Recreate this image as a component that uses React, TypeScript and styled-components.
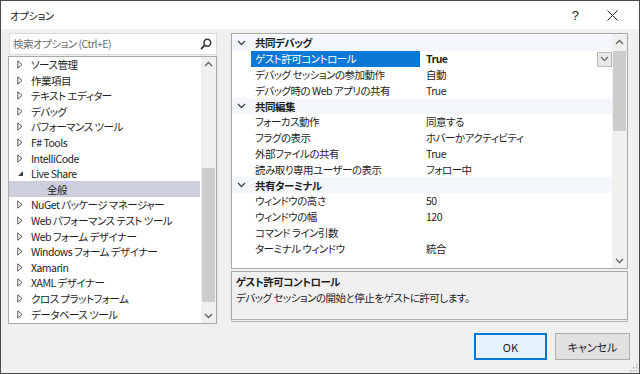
import React from 'react';
import styled, { createGlobalStyle } from 'styled-components';

const GlobalStyle = createGlobalStyle`
  html, body {
    margin: 0;
    padding: 0;
    background: #f0f0f0;
  }
  * {
    box-sizing: border-box;
  }
`;

interface TreeItem {
  label: string;
  state: 'closed' | 'open' | 'leaf';
  selected?: boolean;
}

interface PropRow {
  kind: 'category' | 'prop';
  name: string;
  value?: string;
  selected?: boolean;
}

const treeItems: TreeItem[] = [
  { label: 'ソース管理', state: 'closed' },
  { label: '作業項目', state: 'closed' },
  { label: 'テキスト エディター', state: 'closed' },
  { label: 'デバッグ', state: 'closed' },
  { label: 'パフォーマンス ツール', state: 'closed' },
  { label: 'F# Tools', state: 'closed' },
  { label: 'IntelliCode', state: 'closed' },
  { label: 'Live Share', state: 'open' },
  { label: '全般', state: 'leaf', selected: true },
  { label: 'NuGet パッケージ マネージャー', state: 'closed' },
  { label: 'Web パフォーマンス テスト ツール', state: 'closed' },
  { label: 'Web フォーム デザイナー', state: 'closed' },
  { label: 'Windows フォーム デザイナー', state: 'closed' },
  { label: 'Xamarin', state: 'closed' },
  { label: 'XAML デザイナー', state: 'closed' },
  { label: 'クロス プラットフォーム', state: 'closed' },
  { label: 'データベース ツール', state: 'closed' },
  { label: 'テスト', state: 'closed' },
];

const propRows: PropRow[] = [
  { kind: 'category', name: '共同デバッグ' },
  { kind: 'prop', name: 'ゲスト許可コントロール', value: 'True', selected: true },
  { kind: 'prop', name: 'デバッグ セッションの参加動作', value: '自動' },
  { kind: 'prop', name: 'デバッグ時の Web アプリの共有', value: 'True' },
  { kind: 'category', name: '共同編集' },
  { kind: 'prop', name: 'フォーカス動作', value: '同意する' },
  { kind: 'prop', name: 'フラグの表示', value: 'ホバーかアクティビティ' },
  { kind: 'prop', name: '外部ファイルの共有', value: 'True' },
  { kind: 'prop', name: '読み取り専用ユーザーの表示', value: 'フォロー中' },
  { kind: 'category', name: '共有ターミナル' },
  { kind: 'prop', name: 'ウィンドウの高さ', value: '50' },
  { kind: 'prop', name: 'ウィンドウの幅', value: '120' },
  { kind: 'prop', name: 'コマンド ライン引数', value: '' },
  { kind: 'prop', name: 'ターミナル ウィンドウ', value: '統合' },
];

const Chevron = ({ up, color = '#606060' }: { up?: boolean; color?: string }) => (
  <svg width="9" height="6" viewBox="0 0 9 6">
    <path
      d={up ? 'M1 5 L4.5 1.5 L8 5' : 'M1 1 L4.5 4.5 L8 1'}
      fill="none"
      stroke={color}
      strokeWidth="1.3"
    />
  </svg>
);

const Expander = ({ state }: { state: TreeItem['state'] }) => {
  if (state === 'leaf') return <ExpanderBox />;
  return (
    <ExpanderBox>
      {state === 'closed' ? (
        <svg width="6" height="9" viewBox="0 0 6 9">
          <path d="M0.8 0.8 L5 4.5 L0.8 8.2 Z" fill="none" stroke="#555" strokeWidth="1" />
        </svg>
      ) : (
        <svg width="7" height="7" viewBox="0 0 7 7">
          <path d="M6 1 L6 6 L1 6 Z" fill="#444" />
        </svg>
      )}
    </ExpanderBox>
  );
};

export default function App() {
  return (
    <>
      <GlobalStyle />
      <Window>
        <TitleBar>
          <TitleText>オプション</TitleText>
          <TitleButtons>
            <HelpButton>?</HelpButton>
            <CloseButton>
              <svg width="11" height="11" viewBox="0 0 11 11">
                <path d="M0.5 0.5 L10.5 10.5 M10.5 0.5 L0.5 10.5" stroke="#222" strokeWidth="1" />
              </svg>
            </CloseButton>
          </TitleButtons>
        </TitleBar>

        <Body>
          <LeftColumn>
            <SearchBox>
              <SearchText>検索オプション (Ctrl+E)</SearchText>
              <svg width="12" height="12" viewBox="0 0 12 12">
                <circle cx="7.3" cy="4.7" r="3.4" fill="none" stroke="#333" strokeWidth="1.5" />
                <path d="M4.8 7.2 L1 11" stroke="#333" strokeWidth="1.8" />
              </svg>
            </SearchBox>
            <TreeBox>
              <TreeList>
                {treeItems.map((item) => (
                  <TreeRow key={item.label} $selected={item.selected} $indent={item.state === 'leaf' ? 1 : 0}>
                    <Expander state={item.state} />
                    <span>{item.label}</span>
                  </TreeRow>
                ))}
              </TreeList>
              <ScrollBar>
                <ScrollArrow>
                  <Chevron up />
                </ScrollArrow>
                <ScrollTrack>
                  <ScrollThumb $top={96} $height={134} />
                </ScrollTrack>
                <ScrollArrow>
                  <Chevron />
                </ScrollArrow>
              </ScrollBar>
            </TreeBox>
          </LeftColumn>

          <RightColumn>
            <GridBox>
              <GridList>
                {propRows.map((row) =>
                  row.kind === 'category' ? (
                    <CategoryRow key={row.name}>
                      <Gutter>
                        <Chevron color="#444" />
                      </Gutter>
                      <CategoryName>{row.name}</CategoryName>
                    </CategoryRow>
                  ) : (
                    <PropertyRow key={row.name}>
                      <Gutter />
                      <PropName $selected={row.selected}>{row.name}</PropName>
                      <PropValue $bold={row.selected}>
                        <span>{row.value}</span>
                        {row.selected && (
                          <DropButton>
                            <Chevron color="#707070" />
                          </DropButton>
                        )}
                      </PropValue>
                    </PropertyRow>
                  )
                )}
              </GridList>
              <ScrollBar>
                <ScrollArrow>
                  <Chevron up />
                </ScrollArrow>
                <ScrollTrack>
                  <ScrollThumb $top={2} $height={80} />
                </ScrollTrack>
                <ScrollArrow>
                  <Chevron />
                </ScrollArrow>
              </ScrollBar>
            </GridBox>
            <DescriptionBox>
              <DescTitle>ゲスト許可コントロール</DescTitle>
              <DescText>デバッグ セッションの開始と停止をゲストに許可します。</DescText>
            </DescriptionBox>
          </RightColumn>
        </Body>

        <Footer>
          <DialogButton $primary>OK</DialogButton>
          <DialogButton>キャンセル</DialogButton>
        </Footer>
        <Grip>
          <svg width="10" height="10" viewBox="0 0 10 10">
            <g fill="#b4b4b4">
              <rect x="8" y="2" width="1.5" height="1.5" />
              <rect x="5" y="5" width="1.5" height="1.5" />
              <rect x="8" y="5" width="1.5" height="1.5" />
              <rect x="2" y="8" width="1.5" height="1.5" />
              <rect x="5" y="8" width="1.5" height="1.5" />
              <rect x="8" y="8" width="1.5" height="1.5" />
            </g>
          </svg>
        </Grip>
      </Window>
    </>
  );
}

const Window = styled.div`
  position: relative;
  width: 640px;
  height: 374px;
  border: 1px solid #4a4a4a;
  background: #f0f0f0;
  color: #1e1e1e;
  font-family: "Noto Sans CJK JP", "Noto Sans", sans-serif;
  font-feature-settings: "palt";
  font-size: 10.5px;
  letter-spacing: -0.5px;
  display: flex;
  flex-direction: column;
  overflow: hidden;
`;

const TitleBar = styled.div`
  height: 28px;
  display: flex;
  align-items: center;
  padding-left: 9px;
  background: #ffffff;
`;

const TitleText = styled.div`
  flex-grow: 1;
`;

const TitleButtons = styled.div`
  display: flex;
  align-items: center;
  height: 100%;
`;

const HelpButton = styled.div`
  width: 28px;
  text-align: center;
  font-family: "Liberation Sans", sans-serif;
  font-size: 13px;
`;

const CloseButton = styled.div`
  width: 46px;
  height: 100%;
  display: flex;
  align-items: center;
  justify-content: center;
  margin-right: 4px;
`;

const Body = styled.div`
  display: flex;
  gap: 14px;
  padding: 4px 0 0 7px;
  height: 295px;
`;

const LeftColumn = styled.div`
  width: 209px;
  display: flex;
  flex-direction: column;
  gap: 1px;
`;

const SearchBox = styled.div`
  height: 22px;
  margin-left: 1px;
  background: #ffffff;
  border: 1px solid #d9d9d9;
  display: flex;
  align-items: center;
  justify-content: space-between;
  padding: 0 4px 0 3px;
`;

const SearchText = styled.span`
  color: #6d6d6d;
`;

const TreeBox = styled.div`
  height: 272px;
  background: #ffffff;
  border: 1px solid #a9a9a9;
  display: flex;
  overflow: hidden;
`;

const TreeList = styled.div`
  flex-grow: 1;
  padding: 0 1px 0 0;
  overflow: hidden;
`;

const TreeRow = styled.div<{ $selected?: boolean; $indent: number }>`
  height: 15.6px;
  display: flex;
  align-items: center;
  padding-left: ${(p) => 6 + p.$indent * 16}px;
  background: ${(p) => (p.$selected ? '#cdd0dc' : 'transparent')};
  white-space: nowrap;
`;

const ExpanderBox = styled.span`
  width: 10px;
  display: inline-flex;
  align-items: center;
  justify-content: center;
  margin-right: 6px;
`;

const ScrollBar = styled.div`
  width: 15px;
  flex-shrink: 0;
  background: #f0f0f0;
  display: flex;
  flex-direction: column;
`;

const ScrollArrow = styled.div`
  height: 15px;
  display: flex;
  align-items: center;
  justify-content: center;
`;

const ScrollTrack = styled.div`
  position: relative;
  flex-grow: 1;
`;

const ScrollThumb = styled.div<{ $top: number; $height: number }>`
  position: absolute;
  left: 1px;
  right: 1px;
  top: ${(p) => p.$top}px;
  height: ${(p) => p.$height}px;
  background: #cdcdcd;
`;

const RightColumn = styled.div`
  width: 397px;
  display: flex;
  flex-direction: column;
  gap: 2px;
`;

const GridBox = styled.div`
  height: 236px;
  background: #ffffff;
  border: 1px solid #a9a9a9;
  display: flex;
  overflow: hidden;
`;

const GridList = styled.div`
  flex-grow: 1;
  padding-top: 1px;
  overflow: hidden;
`;

const CategoryRow = styled.div`
  height: 15.8px;
  display: flex;
  align-items: center;
  background: #f3f6fb;
`;

const Gutter = styled.div`
  width: 19px;
  flex-shrink: 0;
  display: flex;
  align-items: center;
  justify-content: center;
`;

const CategoryName = styled.div`
  font-weight: bold;
  padding-left: 4px;
`;

const PropertyRow = styled.div`
  height: 15.8px;
  display: flex;
  align-items: stretch;
`;

const PropName = styled.div<{ $selected?: boolean }>`
  width: 169px;
  flex-shrink: 0;
  display: flex;
  align-items: center;
  padding-left: 4px;
  background: ${(p) => (p.$selected ? '#0a78d7' : 'transparent')};
  color: ${(p) => (p.$selected ? '#ffffff' : 'inherit')};
  white-space: nowrap;
`;

const PropValue = styled.div<{ $bold?: boolean }>`
  flex-grow: 1;
  display: flex;
  align-items: center;
  justify-content: space-between;
  padding-left: 6px;
  font-weight: ${(p) => (p.$bold ? 'bold' : 'normal')};
`;

const DropButton = styled.div`
  width: 15px;
  height: 15px;
  margin-top: 1px;
  background: #e8e8e8;
  border: 1px solid #b9b9b9;
  display: flex;
  align-items: center;
  justify-content: center;
`;

const DescriptionBox = styled.div`
  height: 51px;
  border: 1px solid #a9a9a9;
  border-bottom: 3px double #b0b0b0;
  padding: 2px 4px;
  display: flex;
  flex-direction: column;
`;

const DescTitle = styled.div`
  font-weight: bold;
  line-height: 16px;
`;

const DescText = styled.div`
  line-height: 16px;
`;

const Footer = styled.div`
  display: flex;
  justify-content: flex-end;
  gap: 8px;
  padding: 9px 9px 0 0;
`;

const DialogButton = styled.div<{ $primary?: boolean }>`
  width: ${(p) => (p.$primary ? 73 : 75)}px;
  height: 27px;
  display: flex;
  align-items: center;
  justify-content: center;
  font-size: 11px;
  letter-spacing: 0;
  background: ${(p) => (p.$primary ? '#e5f1fb' : '#e1e1e1')};
  border: ${(p) => (p.$primary ? '2px solid #0078d7' : '1px solid #adadad')};
`;

const Grip = styled.div`
  position: absolute;
  right: 1px;
  bottom: 1px;
  line-height: 0;
`;
